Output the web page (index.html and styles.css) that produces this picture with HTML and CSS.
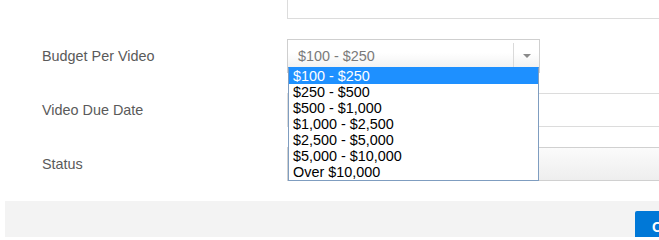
FILE: index.html
```html
<!DOCTYPE html>
<html>
<head>
<meta charset="utf-8">
<link rel="stylesheet" href="styles.css">
</head>
<body>
<div class="modal">
  <div class="form">
    <div class="row">
      <div class="label"></div>
      <div class="input wide"></div>
    </div>
    <div class="row">
      <div class="label">Budget Per Video</div>
      <div class="select-wrap">
        <div class="select">
          <span class="value">$100 - $250</span>
          <span class="arrow"></span>
        </div>
        <ul class="dropdown">
          <li class="active">$100 - $250</li>
          <li>$250 - $500</li>
          <li>$500 - $1,000</li>
          <li>$1,000 - $2,500</li>
          <li>$2,500 - $5,000</li>
          <li>$5,000 - $10,000</li>
          <li>Over $10,000</li>
        </ul>
      </div>
    </div>
    <div class="row">
      <div class="label">Video Due Date</div>
      <div class="input wide"></div>
    </div>
    <div class="row">
      <div class="label">Status</div>
      <div class="status wide"></div>
    </div>
  </div>
  <div class="footer">
    <button class="btn">Create</button>
  </div>
</div>
</body>
</html>
```
FILE: styles.css
```css
html, body {
  margin: 0;
  padding: 0;
  background: #fff;
  overflow: hidden;
  width: 659px;
  height: 237px;
  font-family: "Liberation Sans", Arial, sans-serif;
}

.modal {
  margin-left: 5px;
  width: 900px;
}

.form {
  margin-top: -15px;
  padding-left: 37px;
}

.row {
  display: flex;
  align-items: center;
  height: 34px;
  margin-bottom: 20px;
}

.label {
  width: 245px;
  flex: none;
  font-size: 14.4px;
  color: #5a5a5a;
}

.wide {
  flex: 1;
  align-self: stretch;
}

.input {
  box-sizing: border-box;
  border: 1px solid #dcdcdc;
  background: #fff;
}

.status {
  box-sizing: border-box;
  border: 1px solid #d0d0d0;
  background: linear-gradient(#fbfbfb, #eeeeee);
}

.select-wrap {
  position: relative;
  width: 253px;
  height: 34px;
}

.select {
  box-sizing: border-box;
  height: 100%;
  display: flex;
  align-items: center;
  border: 1px solid #cfcfcf;
  background: linear-gradient(#ffffff 40%, #eeeeee);
}

.value {
  flex: 1;
  padding-left: 10px;
  font-size: 14.4px;
  color: #7a7a7a;
}

.arrow {
  width: 25px;
  align-self: stretch;
  margin: 3px 0;
  border-left: 1px solid #dadada;
  display: flex;
  align-items: center;
  justify-content: center;
}

.arrow::after {
  content: "";
  border-top: 4px solid #8a8a8a;
  border-left: 4px solid transparent;
  border-right: 4px solid transparent;
}

.dropdown {
  position: absolute;
  top: 28px;
  left: 1px;
  width: 251px;
  box-sizing: border-box;
  margin: 0;
  padding: 0;
  list-style: none;
  background: #fff;
  border: 1px solid #7f9dc0;
  border-top-color: #1e90ff;
  font-size: 14.4px;
  line-height: 16px;
  color: #000;
}

.dropdown li {
  padding-left: 4px;
  height: 16px;
}

.dropdown li.active {
  background: #1e90ff;
  color: #fff;
}

.footer {
  background: #f3f3f3;
  height: 40px;
  padding: 10px 0 0 630px;
}

.btn {
  background: #0078d7;
  color: #fff;
  border: none;
  border-radius: 2px;
  font-family: "Liberation Sans", Arial, sans-serif;
  font-size: 14.4px;
  font-weight: bold;
  line-height: 20px;
  padding: 6px 17px;
}
```
